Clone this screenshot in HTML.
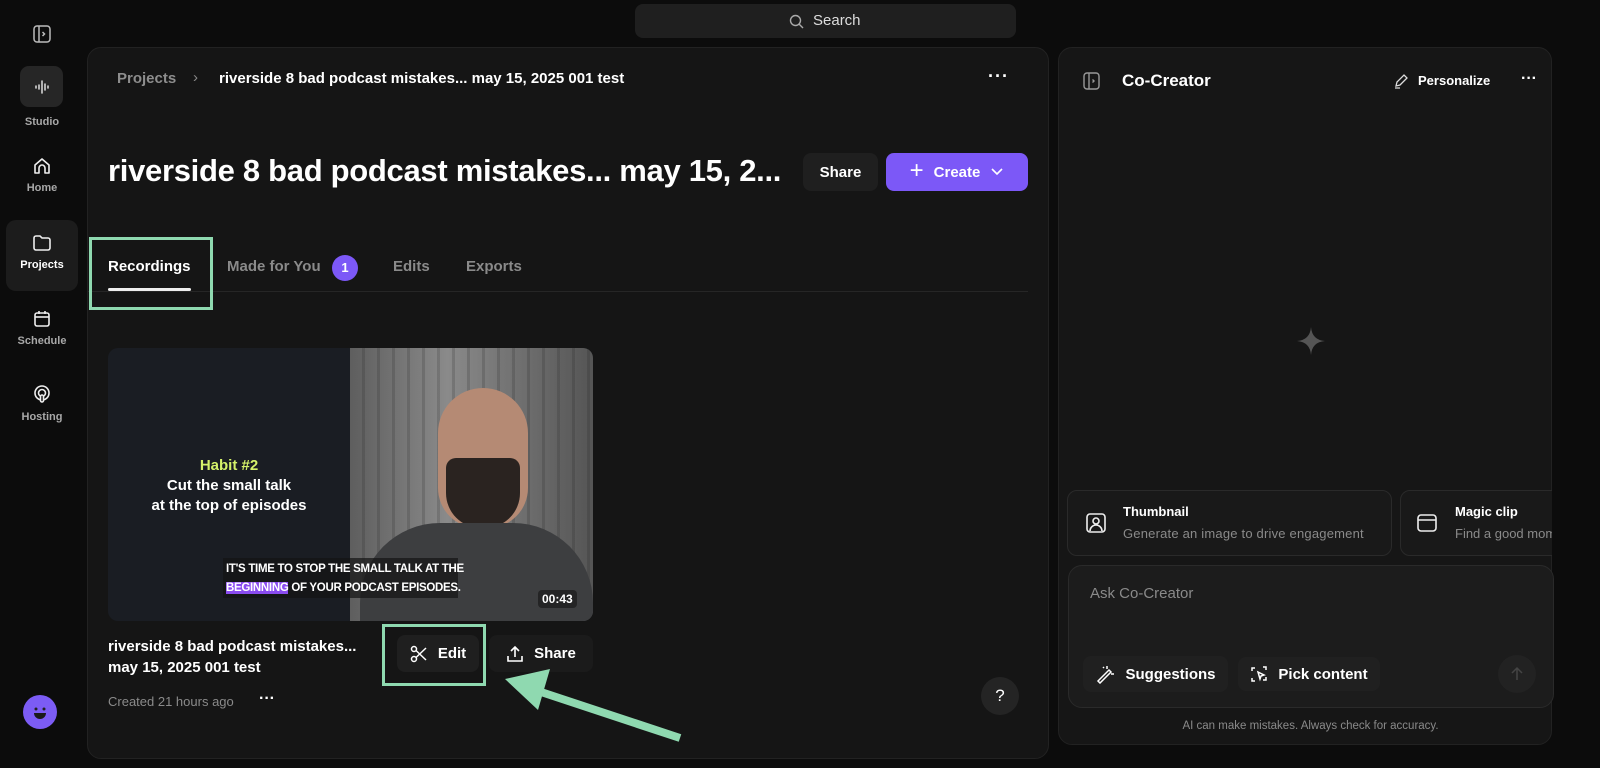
<!DOCTYPE html>
<html><head><meta charset="utf-8"><style>
*{box-sizing:border-box;margin:0;padding:0}
body{width:1600px;height:768px;background:#0c0c0c;font-family:"Liberation Sans",sans-serif;color:#fff;position:relative;overflow:hidden}
.a{position:absolute}
.panel{background:#151515;border:1px solid #222;border-radius:14px}
.nav{position:absolute;left:6px;width:72px;text-align:center;font-size:11px;font-weight:bold;color:#a8a8a8}
.nav svg{display:block;margin:0 auto 6px}
.btn{position:absolute;background:#1f1f1f;border-radius:8px;font-weight:bold;font-size:15px;display:flex;align-items:center;justify-content:center;gap:10px}
.tab{position:absolute;top:258px;font-size:15px;font-weight:bold;color:#8a8a8a}
</style></head><body>

<!-- sidebar -->
<svg class="a" style="left:32px;top:24px" width="20" height="20" viewBox="0 0 20 20" fill="none" stroke="#bbb" stroke-width="1.5"><rect x="2" y="2" width="16" height="16" rx="3"/><line x1="7" y1="2" x2="7" y2="18"/><path d="M10.5 8l2 2-2 2"/></svg>
<div class="a" style="left:20px;top:66px;width:43px;height:41px;background:#262626;border-radius:9px"></div>
<svg class="a" style="left:32px;top:77px" width="20" height="20" viewBox="0 0 20 20" stroke="#ddd" stroke-width="1.5" stroke-linecap="round"><line x1="4" y1="9" x2="4" y2="11"/><line x1="7" y1="8" x2="7" y2="12"/><line x1="10" y1="4" x2="10" y2="16"/><line x1="13" y1="7" x2="13" y2="13"/><line x1="16" y1="9" x2="16" y2="11"/></svg>
<div class="nav" style="top:116px">Studio</div>
<div class="nav" style="top:156px"><svg width="20" height="20" viewBox="0 0 20 20" fill="none" stroke="#eee" stroke-width="1.6"><path d="M3 9l7-6 7 6v8h-4v-5a3 3 0 0 0-6 0v5H3z" stroke-linejoin="round"/></svg>Home</div>
<div class="a" style="left:6px;top:220px;width:72px;height:71px;background:#1c1c1c;border-radius:10px"></div>
<div class="nav" style="top:233px;color:#fff"><svg width="20" height="20" viewBox="0 0 20 20" fill="none" stroke="#eee" stroke-width="1.6"><path d="M2 5a2 2 0 0 1 2-2h4l2 2h6a2 2 0 0 1 2 2v8a2 2 0 0 1-2 2H4a2 2 0 0 1-2-2z"/></svg>Projects</div>
<div class="nav" style="top:309px"><svg width="20" height="20" viewBox="0 0 20 20" fill="none" stroke="#eee" stroke-width="1.6"><rect x="3" y="4" width="14" height="13" rx="2"/><line x1="3" y1="8" x2="17" y2="8"/><line x1="7" y1="2" x2="7" y2="5"/><line x1="13" y1="2" x2="13" y2="5"/></svg>Schedule</div>
<div class="nav" style="top:385px"><svg width="20" height="20" viewBox="0 0 20 20" fill="none" stroke="#eee" stroke-width="1.6"><circle cx="10" cy="8" r="7"/><circle cx="10" cy="8" r="3.5"/><rect x="8.5" y="10" width="3" height="7" rx="1.5" fill="#0c0c0c"/></svg>Hosting</div>
<div class="a" style="left:23px;top:695px;width:34px;height:34px;border-radius:50%;background:#7c5cf5"></div>
<svg class="a" style="left:23px;top:695px" width="34" height="34" viewBox="0 0 34 34"><circle cx="13" cy="14" r="1.5" fill="#222"/><circle cx="21" cy="14" r="1.5" fill="#222"/><path d="M11 18h12a6 6 0 0 1-12 0z" fill="#1a1a1a"/></svg>

<!-- search -->
<div class="a" style="left:635px;top:4px;width:381px;height:34px;background:#1f1f1f;border-radius:8px"></div>
<svg class="a" style="left:789px;top:14px" width="15" height="15" viewBox="0 0 15 15" fill="none" stroke="#aaa" stroke-width="1.4"><circle cx="6.5" cy="6.5" r="5"/><line x1="10" y1="10" x2="14" y2="14"/></svg>
<div class="a" style="left:813px;top:12px;font-size:15px;color:#ddd">Search</div>

<!-- main panel -->
<div class="a panel" style="left:87px;top:47px;width:962px;height:712px"></div>
<div class="a" style="left:117px;top:70px;font-size:15px;font-weight:bold;color:#8d8d8d">Projects</div>
<div class="a" style="left:193px;top:69px;font-size:15px;color:#888">&#8250;</div>
<div class="a" style="left:219px;top:70px;font-size:15px;font-weight:bold">riverside 8 bad podcast mistakes... may 15, 2025 001 test</div>
<div class="a" style="left:988px;top:66px;font-size:18px;font-weight:bold;letter-spacing:1px">···</div>
<div class="a" style="left:108px;top:153px;font-size:31px;font-weight:bold;letter-spacing:-0.3px">riverside 8 bad podcast mistakes... may 15, 2...</div>
<div class="btn" style="left:803px;top:153px;width:75px;height:38px">Share</div>
<div class="btn" style="left:886px;top:153px;width:142px;height:38px;background:#7c58f7"><span style="font-size:24px;font-weight:normal;margin-top:-3px">+</span>Create<svg width="14" height="10" viewBox="0 0 14 10" fill="none" stroke="#fff" stroke-width="1.6"><path d="M2 2l5 5 5-5"/></svg></div>

<div class="tab" style="left:108px;color:#fff">Recordings</div>
<div class="a" style="left:108px;top:288px;width:83px;height:3px;background:#eee;border-radius:2px"></div>
<div class="tab" style="left:227px">Made for You</div>
<div class="a" style="left:332px;top:255px;width:26px;height:26px;border-radius:50%;background:#7c58f7;font-size:13px;font-weight:bold;text-align:center;line-height:26px">1</div>
<div class="tab" style="left:393px">Edits</div>
<div class="tab" style="left:466px">Exports</div>
<div class="a" style="left:88px;top:291px;width:940px;height:1px;background:#262626"></div>
<div class="a" style="left:89px;top:237px;width:124px;height:73px;border:3px solid #8fd9b0"></div>

<!-- thumbnail -->
<div class="a" style="left:108px;top:348px;width:485px;height:273px;border-radius:10px;overflow:hidden;background:#1a1d23">
 <div class="a" style="left:242px;top:0;width:243px;height:273px;background:linear-gradient(90deg,#5e5e5e,#8a8a8a 40%,#555)"></div>
 <div class="a" style="left:242px;top:0;width:243px;height:273px;background:repeating-linear-gradient(90deg,transparent 0 12px,rgba(30,30,30,.18) 12px 15px)"></div>
 <div class="a" style="left:330px;top:40px;width:90px;height:140px;border-radius:45px 45px 40px 40px;background:#b58a74"></div>
 <div class="a" style="left:338px;top:110px;width:74px;height:70px;border-radius:10px 10px 35px 35px;background:#2a2320"></div>
 <div class="a" style="left:252px;top:175px;width:233px;height:100px;border-radius:80px 80px 0 0;background:#3d3e40"></div>
 <div class="a" style="left:0;top:108px;width:242px;text-align:center;font-size:15px;font-weight:bold;line-height:20px"><span style="color:#d5f26a">Habit #2</span><br>Cut the small talk<br>at the top of episodes</div>
 <div class="a" style="left:115px;top:210px;width:235px;height:40px;background:rgba(20,20,20,.7)"></div>
 <div class="a" style="left:118px;top:212px;font-size:11.5px;font-weight:bold;line-height:19px;letter-spacing:-0.3px">IT'S TIME TO STOP THE SMALL TALK AT THE<br><span style="background:#8a4cf0">BEGINNING</span> OF YOUR PODCAST EPISODES.</div>
 <div class="a" style="left:430px;top:242px;font-size:12px;font-weight:bold;background:rgba(30,30,30,.8);padding:2px 4px;border-radius:4px">00:43</div>
</div>
<div class="a" style="left:108px;top:636px;font-size:15px;font-weight:bold;line-height:21px">riverside 8 bad podcast mistakes...<br>may 15, 2025 001 test</div>
<div class="btn" style="left:397px;top:635px;width:82px;height:37px"><svg width="18" height="18" viewBox="0 0 18 18" fill="none" stroke="#fff" stroke-width="1.5"><circle cx="4" cy="4" r="2.5"/><circle cx="4" cy="14" r="2.5"/><path d="M6 5.5L16 15M6 12.5L16 3"/></svg>Edit</div>
<div class="a" style="left:382px;top:624px;width:104px;height:62px;border:3px solid #8fd9b0"></div>
<div class="btn" style="left:489px;top:635px;width:104px;height:37px;background:#1b1b1b"><svg width="18" height="18" viewBox="0 0 18 18" fill="none" stroke="#fff" stroke-width="1.6"><path d="M9 12V2M5 6l4-4 4 4M2 11v5h14v-5"/></svg>Share</div>
<div class="a" style="left:108px;top:694px;font-size:13px;color:#8a8a8a">Created 21 hours ago</div>
<div class="a" style="left:259px;top:690px;font-size:16px;font-weight:bold">···</div>
<svg class="a" style="left:500px;top:665px" width="190" height="80" viewBox="0 0 190 80"><line x1="180" y1="73" x2="35" y2="25" stroke="#8fd9b0" stroke-width="8"/><path d="M5 14L50 4L38 45z" fill="#8fd9b0"/></svg>
<div class="a" style="left:981px;top:677px;width:38px;height:38px;border-radius:50%;background:#242424;text-align:center;line-height:38px;font-size:17px">?</div>

<!-- right panel -->
<div class="a panel" style="left:1058px;top:47px;width:494px;height:698px;background:#161616"></div>
<svg class="a" style="left:1082px;top:71px" width="20" height="20" viewBox="0 0 20 20" fill="none" stroke="#999" stroke-width="1.4"><rect x="2" y="2" width="15" height="16" rx="3"/><line x1="7" y1="2" x2="7" y2="18"/><path d="M10.5 8.5l1.5 1.5-1.5 1.5"/></svg>
<div class="a" style="left:1122px;top:71px;font-size:17px;font-weight:bold">Co-Creator</div>
<svg class="a" style="left:1393px;top:73px" width="16" height="16" viewBox="0 0 16 16" fill="none" stroke="#ddd" stroke-width="1.3"><path d="M3 13l1-4 7-7 3 3-7 7zM2 15h5"/></svg>
<div class="a" style="left:1418px;top:73px;font-size:13px;font-weight:bold">Personalize</div>
<div class="a" style="left:1521px;top:70px;font-size:16px;font-weight:bold">···</div>
<svg class="a" style="left:1296px;top:326px" width="30" height="30" viewBox="0 0 30 30"><path d="M15 1Q16 14 29 15Q16 16 15 29Q14 16 1 15Q14 14 15 1z" fill="#555"/></svg>

<div class="a" style="left:1067px;top:490px;width:325px;height:66px;border:1px solid #2a2a2a;border-radius:10px;background:#191919"></div>
<svg class="a" style="left:1085px;top:512px" width="22" height="22" viewBox="0 0 22 22" fill="none" stroke="#eee" stroke-width="1.6"><rect x="2" y="2" width="18" height="18" rx="3"/><circle cx="11" cy="9" r="3"/><path d="M5 19a6 6 0 0 1 12 0"/></svg>
<div class="a" style="left:1123px;top:504px;font-size:13px;font-weight:bold">Thumbnail</div>
<div class="a" style="left:1123px;top:526px;font-size:13px;color:#8a8a8a;letter-spacing:0.2px">Generate an image to drive engagement</div>
<div class="a" style="left:1400px;top:490px;width:170px;height:66px;border:1px solid #2a2a2a;border-radius:10px;background:#191919"></div>
<svg class="a" style="left:1416px;top:512px" width="22" height="22" viewBox="0 0 22 22" fill="none" stroke="#eee" stroke-width="1.6"><rect x="2" y="3" width="18" height="16" rx="3"/><line x1="2" y1="8" x2="20" y2="8"/></svg>
<div class="a" style="left:1455px;top:504px;font-size:13px;font-weight:bold">Magic clip</div>
<div class="a" style="left:1455px;top:526px;font-size:13px;color:#8a8a8a;white-space:nowrap;width:110px;overflow:hidden">Find a good moment</div>
<div class="a" style="left:1552px;top:480px;width:48px;height:90px;background:#0c0c0c"></div>

<div class="a" style="left:1068px;top:565px;width:486px;height:143px;border:1px solid #2a2a2a;border-radius:14px;background:#1c1c1c"></div>
<div class="a" style="left:1090px;top:585px;font-size:15px;color:#8a8a8a">Ask Co-Creator</div>
<div class="btn" style="left:1083px;top:656px;width:145px;height:36px;background:#202020"><svg width="20" height="20" viewBox="0 0 20 20" fill="none" stroke="#fff" stroke-width="1.5"><path d="M3 17L14 6l2 2L5 19zM12 2v3M16 10h3M8 3l1 1"/></svg>Suggestions</div>
<div class="btn" style="left:1238px;top:657px;width:142px;height:34px;background:#202020"><svg width="18" height="18" viewBox="0 0 18 18" fill="none" stroke="#fff" stroke-width="1.5"><path d="M2 6V3h3M13 2h3v3M16 12v3h-3M5 16H2v-3"/><path d="M8 7l6 3-3 1-1 3z"/></svg>Pick content</div>
<div class="a" style="left:1498px;top:655px;width:38px;height:38px;border-radius:50%;background:#222"></div>
<svg class="a" style="left:1509px;top:666px" width="16" height="16" viewBox="0 0 16 16" fill="none" stroke="#444" stroke-width="1.5"><path d="M8 14V2M3 7l5-5 5 5"/></svg>
<div class="a" style="left:1058px;top:720px;width:505px;text-align:center;font-size:11.5px;color:#8a8a8a">AI can make mistakes. Always check for accuracy.</div>
</body></html>
